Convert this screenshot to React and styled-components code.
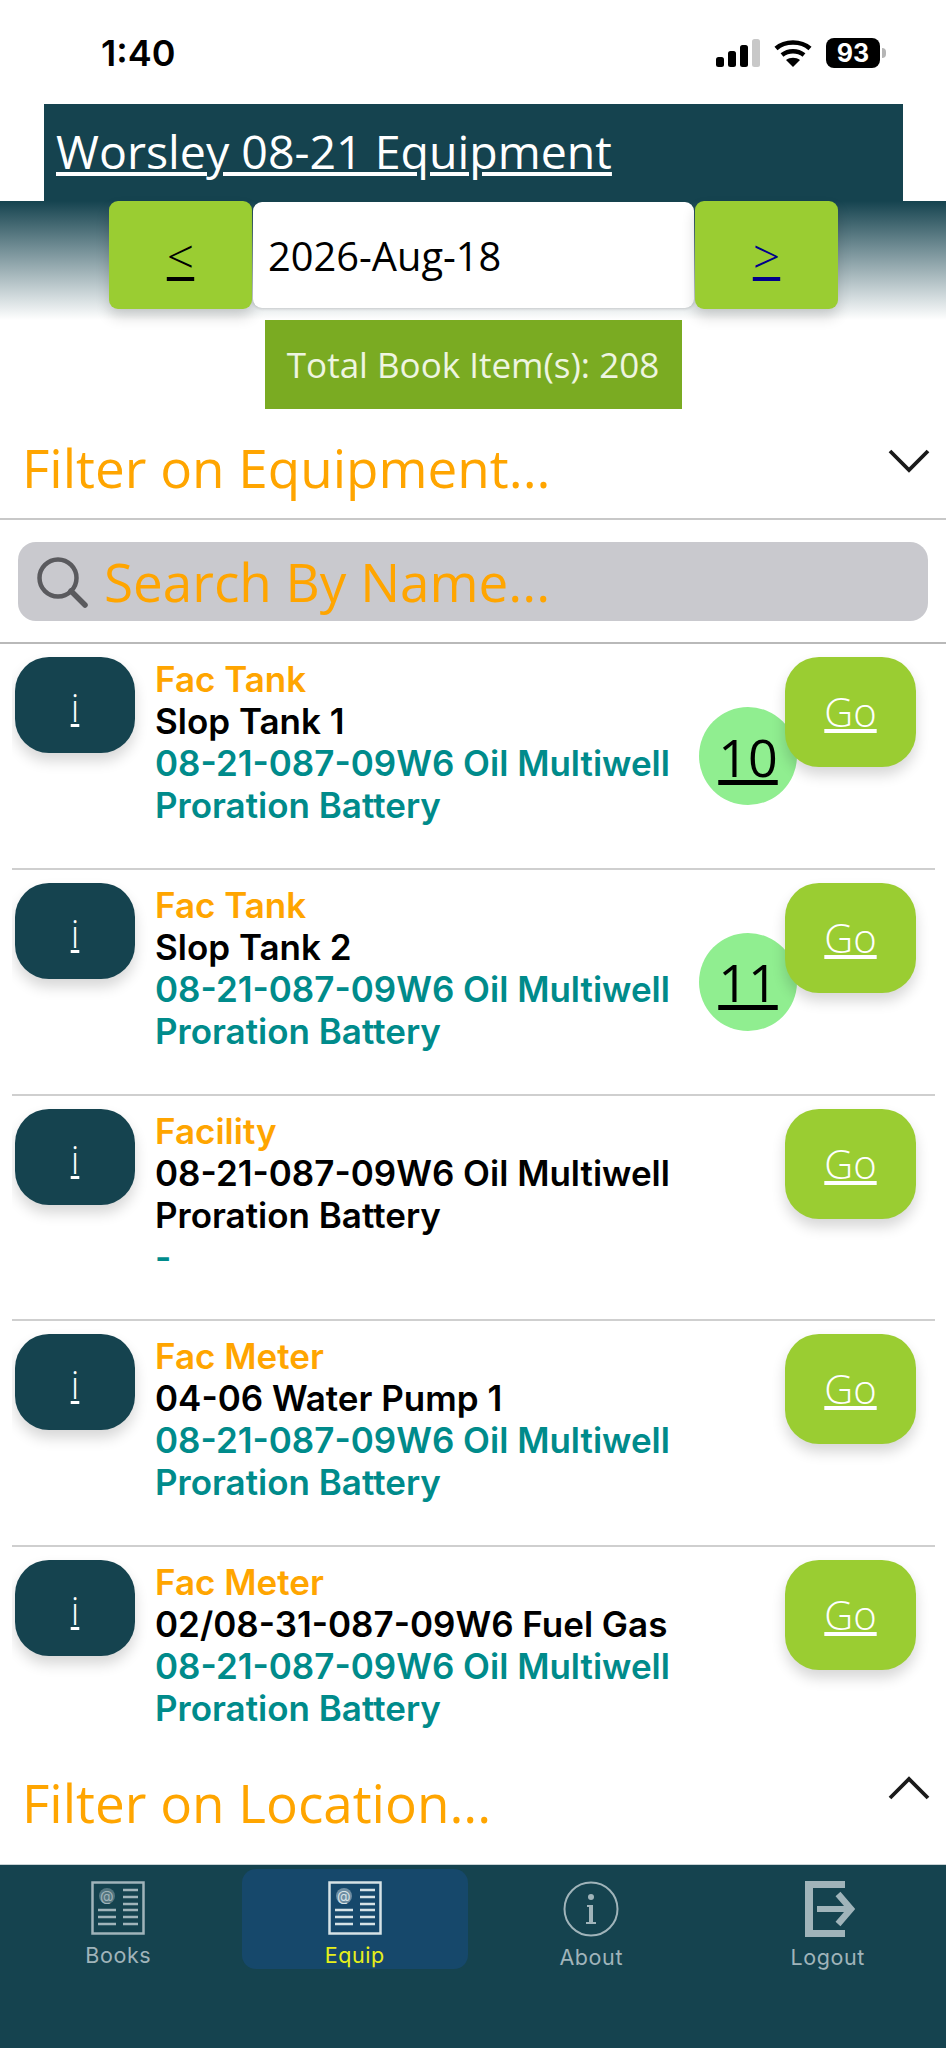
import React from "react";
import styled, { createGlobalStyle } from "styled-components";

const items = [
  { type: "Fac Tank", name: "Slop Tank 1", parent: "08-21-087-09W6 Oil Multiwell Proration Battery", count: 10 },
  { type: "Fac Tank", name: "Slop Tank 2", parent: "08-21-087-09W6 Oil Multiwell Proration Battery", count: 11 },
  { type: "Facility", name: "08-21-087-09W6 Oil Multiwell Proration Battery", parent: "-" },
  { type: "Fac Meter", name: "04-06 Water Pump 1", parent: "08-21-087-09W6 Oil Multiwell Proration Battery" },
  { type: "Fac Meter", name: "02/08-31-087-09W6 Fuel Gas", parent: "08-21-087-09W6 Oil Multiwell Proration Battery" },
];

const BookIcon = () => (
  <svg width="54" height="54" viewBox="0 0 54 54" fill="none" stroke="currentColor">
    <rect x="1.5" y="1.5" width="51" height="51" strokeWidth="2.5" />
    <circle cx="16" cy="15" r="8" fill="currentColor" opacity="0.45" stroke="none" />
    <text x="16" y="20" fontSize="14" fontFamily="Inter, sans-serif" textAnchor="middle" fill="currentColor" stroke="none">@</text>
    <path d="M32 9h15M32 16h15M32 23h15M7 29h18M32 29h15M7 36h18M32 36h15M7 43h18M32 43h15" strokeWidth="2.4" />
  </svg>
);

const InfoIcon = () => (
  <svg width="56" height="56" viewBox="0 0 56 56" fill="none" stroke="currentColor">
    <circle cx="28" cy="28" r="26.5" strokeWidth="2" />
    <circle cx="28" cy="16" r="3" fill="currentColor" stroke="none" />
    <path d="M24 24h6v17h3v2H23v-2h3V26h-2z" fill="currentColor" stroke="none" />
  </svg>
);

const LogoutIcon = () => (
  <svg width="54" height="56" viewBox="-4 0 54 56" fill="currentColor">
    <path d="M0 0h40v7H8v42h32v7H0z" />
    <path d="M12 25h30v6H12z" />
    <path d="M33 13l13 15-13 15" fill="none" stroke="currentColor" strokeWidth="6.500" />
  </svg>
);

const tabs = [
  { label: "Books", icon: <BookIcon /> },
  { label: "Equip", icon: <BookIcon />, active: true },
  { label: "About", icon: <InfoIcon /> },
  { label: "Logout", icon: <LogoutIcon /> },
];

const App = () => {
  return (
    <Page>
      <GlobalStyle />
      <StatusBar>
        <Clock>1:40</Clock>
        <StatusIcons>
          <svg width="44" height="28" viewBox="0 0 44 28">
            <rect x="0" y="18" width="8" height="10" rx="2.5" fill="#000" />
            <rect x="12" y="12" width="8" height="16" rx="2.5" fill="#000" />
            <rect x="24" y="6" width="8" height="22" rx="2.5" fill="#000" />
            <rect x="36" y="0" width="8" height="28" rx="2.5" fill="#c8c8c8" />
          </svg>
          <svg width="38" height="28" viewBox="0 0 38 28" fill="none" stroke="#000">
            <path d="M2 9.500C11 1.500 27 1.500 36 9.500" strokeWidth="4.600" />
            <path d="M8 16c6.500-5 15.500-5 22 0" strokeWidth="4.600" />
            <path d="M19 28l-7-7c4-3 10-3 14 0z" fill="#000" stroke="none" />
          </svg>
          <Battery>93</Battery>
        </StatusIcons>
      </StatusBar>

      <TitleBar>
        <a href="#title">Worsley 08-21 Equipment</a>
      </TitleBar>

      <DateBand>
        <DateRow>
          <StepButton href="#prev">&lt;</StepButton>
          <DateBox>2026-Aug-18</DateBox>
          <StepButton href="#next" $next>&gt;</StepButton>
        </DateRow>
      </DateBand>

      <TotalWrap>
        <Total>Total Book Item(s): 208</Total>
      </TotalWrap>

      <FilterHeader>
        Filter on Equipment...
        <svg width="42" height="24" viewBox="0 0 42 24" fill="none" stroke="#1a1a1a" strokeWidth="3.800">
          <path d="M2 2l19 19L40 2" />
        </svg>
      </FilterHeader>

      <SearchWrap>
        <SearchBox>
          <svg width="52" height="52" viewBox="0 0 52 52" fill="none" stroke="#5a5a5e" strokeWidth="4.500">
            <circle cx="22" cy="22" r="18.500" />
            <path d="M35 35l14 14" strokeLinecap="round" strokeWidth="5.500" />
          </svg>
          Search By Name...
        </SearchBox>
      </SearchWrap>

      <List>
        {items.map((item, i) => (
          <Row key={i} $last={i === items.length - 1}>
            <InfoButton href="#info">i</InfoButton>
            <RowText>
              <TypeLabel>{item.type}</TypeLabel>
              <NameLabel>{item.name}</NameLabel>
              <ParentLabel>{item.parent}</ParentLabel>
            </RowText>
            {item.count && <CountBadge href="#count">{item.count}</CountBadge>}
            <GoButton href="#go">Go</GoButton>
          </Row>
        ))}
      </List>

      <FilterFooter>
        Filter on Location...
        <svg width="42" height="24" viewBox="0 0 42 24" fill="none" stroke="#1a1a1a" strokeWidth="3.800">
          <path d="M2 22L21 3l19 19" />
        </svg>
      </FilterFooter>

      <TabBar>
        {tabs.map((tab) => (
          <Tab key={tab.label} $active={tab.active}>
            <TabIcon>{tab.icon}</TabIcon>
            {tab.label}
          </Tab>
        ))}
      </TabBar>
    </Page>
  );
};

const GlobalStyle = createGlobalStyle`
  html, body {
    margin: 0;
    padding: 0;
    background: #fff;
  }
  * {
    box-sizing: border-box;
  }
`;

const Page = styled.div`
  width: 946px;
  height: 2048px;
  display: flex;
  flex-direction: column;
  overflow: hidden;
  font-family: "Open Sans", "Liberation Sans", sans-serif;
  background: #fff;
`;

const StatusBar = styled.div`
  height: 104px;
  flex: none;
  display: flex;
  justify-content: space-between;
  align-items: flex-start;
  padding: 31px 66px 0 101px;
`;

const Clock = styled.div`
  font-family: Inter, sans-serif;
  font-size: 36px;
  line-height: 44px;
  font-weight: 600;
  color: #000;
`;

const StatusIcons = styled.div`
  display: flex;
  align-items: center;
  gap: 14px;
  padding-top: 7px;
`;

const Battery = styled.div`
  width: 54px;
  height: 30px;
  border-radius: 8px;
  background: #000;
  color: #fff;
  font-family: Inter, sans-serif;
  font-size: 25px;
  font-weight: 700;
  line-height: 30px;
  text-align: center;
  position: relative;

  &::after {
    content: "";
    position: absolute;
    right: -6px;
    top: 10px;
    width: 4px;
    height: 10px;
    border-radius: 0 4px 4px 0;
    background: #b5b5b5;
  }
`;

const TitleBar = styled.div`
  height: 97px;
  flex: none;
  margin: 0 43px 0 44px;
  padding: 16px 12px 0;
  background: #15434f;

  a {
    color: #fff;
    font-size: 46.5px;
    line-height: 62px;
  }
`;

const DateBand = styled.div`
  height: 119px;
  flex: none;
  background: linear-gradient(#15434f, #ffffff);
`;

const DateRow = styled.div`
  display: flex;
  align-items: center;
  gap: 1px;
  height: 108px;
  margin: 0 108px 0 109px;
`;

const StepButton = styled.a`
  width: 143px;
  height: 108px;
  flex: none;
  display: flex;
  align-items: center;
  justify-content: center;
  border-radius: 9px;
  background: #9acd32;
  box-shadow: 0 8px 14px rgba(0, 0, 0, 0.16);
  color: ${(p) => (p.$next ? "#00008b" : "#000")};
  font-size: 48px;
  font-weight: 300;
  text-decoration: underline;
`;

const DateBox = styled.div`
  flex: 1;
  height: 106px;
  display: flex;
  align-items: center;
  padding-left: 15px;
  border-radius: 9px;
  background: #fff;
  box-shadow: 0 1px 3px rgba(0, 0, 0, 0.15);
  color: #000;
  font-size: 39.8px;
`;

const TotalWrap = styled.div`
  flex: none;
  display: flex;
  justify-content: center;
`;

const Total = styled.div`
  width: 417px;
  height: 89px;
  display: flex;
  align-items: center;
  justify-content: center;
  background: #7aab22;
  color: #eef5e0;
  font-size: 35px;
`;

const FilterHeader = styled.div`
  height: 111px;
  flex: none;
  display: flex;
  align-items: center;
  justify-content: space-between;
  padding: 8px 16px 0 22px;
  border-bottom: 2px solid #c8c8c8;
  color: #ffa500;
  font-size: 53px;

  svg {
    margin-bottom: 13px;
  }
`;

const SearchWrap = styled.div`
  height: 124px;
  flex: none;
  padding: 22px 18px 0;
  border-bottom: 2px solid #b9b9b9;
`;

const SearchBox = styled.div`
  height: 79px;
  display: flex;
  align-items: center;
  gap: 16px;
  padding-left: 18px;
  border-radius: 18px;
  background: #c9c9ce;
  color: #ffa500;
  font-size: 53px;
`;

const List = styled.div`
  height: 1096px;
  flex: none;
  margin: 0 11px 0 12px;
  overflow: hidden;
`;

const Row = styled.div`
  height: 225.8px;
  display: flex;
  align-items: flex-start;
  padding: 13px 19px 0 3px;
  border-bottom: ${(p) => (p.$last ? "none" : "2px solid #cfcfcf")};
`;

const InfoButton = styled.a`
  width: 120px;
  height: 96px;
  flex: none;
  margin-right: 20px;
  padding-top: 27px;
  border-radius: 34px;
  background: #15434f;
  box-shadow: 0 8px 14px rgba(0, 0, 0, 0.16);
  color: #fff;
  font-size: 38px;
  font-weight: 300;
  line-height: 46px;
  text-align: center;
  text-decoration: underline;
`;

const RowText = styled.div`
  flex: 1;
  padding-top: 1px;
  font-family: Inter, sans-serif;
  font-size: 35px;
  font-weight: 600;
  line-height: 42px;
`;

const TypeLabel = styled.div`
  color: #ffa500;
`;

const NameLabel = styled.div`
  color: #000;
`;

const ParentLabel = styled.div`
  color: #008b8b;
`;

const CountBadge = styled.a`
  width: 98px;
  height: 98px;
  flex: none;
  margin: 50px -12px 0 0;
  display: flex;
  align-items: center;
  justify-content: center;
  border-radius: 50%;
  background: #90ee90;
  color: #000;
  font-size: 52px;
  font-weight: 400;
  text-decoration: underline;
`;

const GoButton = styled.a`
  width: 131px;
  height: 110px;
  flex: none;
  position: relative;
  padding-top: 30px;
  border-radius: 34px;
  background: #9acd32;
  box-shadow: 0 8px 14px rgba(0, 0, 0, 0.16);
  color: #fff;
  font-size: 40px;
  font-weight: 300;
  line-height: 50px;
  text-align: center;
  text-decoration: underline;
`;

const FilterFooter = styled.div`
  flex: 1;
  display: flex;
  align-items: center;
  justify-content: space-between;
  padding: 0 16px 0 22px;
  color: #ffa500;
  font-size: 53px;

  svg {
    margin-bottom: 28px;
  }
`;

const TabBar = styled.div`
  height: 184px;
  flex: none;
  display: grid;
  grid-template-columns: repeat(4, 1fr);
  align-items: start;
  border-top: 1px solid #c9d3d6;
  background: #15434f;
`;

const Tab = styled.div`
  height: 100px;
  margin: 4px 5px 0;
  padding-top: 12px;
  display: flex;
  flex-direction: column;
  align-items: center;
  border-radius: 14px;
  background: ${(p) => (p.$active ? "#16486b" : "transparent")};
  color: ${(p) => (p.$active ? "#e6f01a" : "#a0b4ba")};
  font-family: Inter, sans-serif;
  font-size: 21.5px;
  line-height: 28px;
  letter-spacing: 0.6px;

  svg {
    color: ${(p) => (p.$active ? "#d6e2e6" : "#a0b4ba")};
  }
`;

const TabIcon = styled.div`
  height: 56px;
  margin-bottom: 6px;
  display: flex;
  align-items: center;
`;

export default App;
